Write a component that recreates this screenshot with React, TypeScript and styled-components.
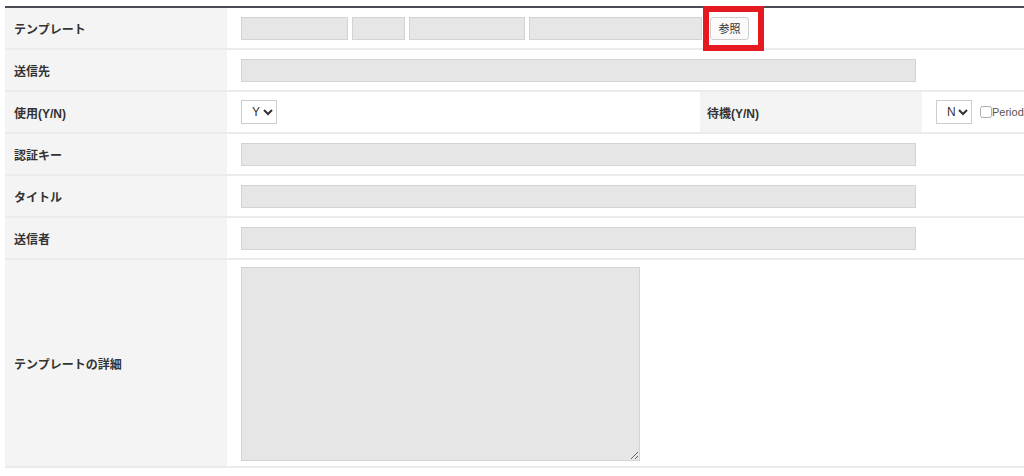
import React from 'react';
import styled, { createGlobalStyle } from 'styled-components';

const GlobalStyle = createGlobalStyle`
  html, body {
    margin: 0;
    padding: 0;
    background: #ffffff;
    overflow: hidden;
  }
  body {
    font-family: "Liberation Sans", "Noto Sans CJK JP", sans-serif;
    color: #333333;
  }
`;

const Page = styled.div`
  padding: 6px 0 0 5px;
  width: 1400px;
`;

const FormTable = styled.table`
  width: 1390px;
  table-layout: fixed;
  border-collapse: separate;
  border-spacing: 0;
  border-top: 2px solid #4b4b57;
`;

const LabelCell = styled.th<{ $indent?: number }>`
  height: 40px;
  padding: 0 0 0 ${(p) => p.$indent ?? 9}px;
  border-bottom: 2px solid #ebebeb;
  background: #f4f4f4;
  text-align: left;
  vertical-align: middle;
  font-family: "Liberation Sans", "Noto Sans CJK JP", sans-serif;
  font-size: 12px;
  font-weight: 700;
  color: #333333;
  white-space: nowrap;
`;

const ValueCell = styled.td<{ $top?: boolean }>`
  padding: ${(p) => (p.$top ? '7px 0 5px 14px' : '0 0 0 14px')};
  border-bottom: 2px solid #ebebeb;
  vertical-align: ${(p) => (p.$top ? 'top' : 'middle')};
  background: #ffffff;
`;

const FieldLine = styled.div`
  display: flex;
  align-items: center;
  gap: 4px;
`;

const TextInput = styled.input<{ $w: number }>`
  box-sizing: border-box;
  width: ${(p) => p.$w}px;
  height: 23px;
  margin: 0;
  padding: 0 6px;
  border: 1px solid #d3d3d3;
  background: #e6e6e6;
  font-family: "Liberation Sans", "Noto Sans CJK JP", sans-serif;
  font-size: 12px;
  outline: none;
`;

const ButtonSlot = styled.div`
  position: relative;
  margin-left: 4px;
`;

const LookupButton = styled.button`
  box-sizing: border-box;
  width: 39px;
  height: 23px;
  padding: 0;
  border: 1px solid #cfcfcf;
  border-radius: 3px;
  background: #fafafa;
  font-family: "Noto Sans CJK JP", sans-serif;
  font-size: 11px;
  color: #333333;
  display: flex;
  align-items: center;
  justify-content: center;
`;

const Highlight = styled.div`
  position: absolute;
  left: -7px;
  right: -15px;
  top: -11px;
  bottom: -11px;
  border: 6px solid #e41a20;
  pointer-events: none;
`;

const Select = styled.select`
  box-sizing: border-box;
  width: 36px;
  height: 24px;
  margin: 0;
  padding: 0 0 0 6px;
  border: 1px solid #cccccc;
  border-radius: 0;
  background: #ffffff;
  font-family: "Liberation Sans", sans-serif;
  font-size: 12px;
  color: #333333;
`;

const Inline = styled.div`
  display: flex;
  align-items: center;
  gap: 8px;
  white-space: nowrap;
`;

const CheckLabel = styled.label`
  display: flex;
  align-items: center;
  font-family: "Liberation Sans", sans-serif;
  font-size: 11px;
  color: #555555;
`;

const Check = styled.input`
  width: 12px;
  height: 12px;
  margin: 0;
  opacity: 0.6;
`;

const DetailArea = styled.textarea`
  box-sizing: border-box;
  display: block;
  width: 399px;
  height: 194px;
  margin: 0;
  border: 1px solid #d3d3d3;
  background: #e6e6e6;
  outline: none;
`;

const templateParts = [107, 53, 116, 173];

const wideRows = ['認証キー', 'タイトル', '送信者'];

export default function App() {
  return (
    <>
      <GlobalStyle />
      <Page>
        <FormTable>
          <colgroup>
            <col style={{ width: 222 }} />
            <col style={{ width: 473 }} />
            <col style={{ width: 222 }} />
            <col style={{ width: 473 }} />
          </colgroup>
          <tbody>
            <tr>
              <LabelCell>テンプレート</LabelCell>
              <ValueCell colSpan={3}>
                <FieldLine>
                  {templateParts.map((w, i) => (
                    <TextInput key={i} $w={w} readOnly />
                  ))}
                  <ButtonSlot>
                    <LookupButton type="button">参照</LookupButton>
                    <Highlight />
                  </ButtonSlot>
                </FieldLine>
              </ValueCell>
            </tr>
            <tr>
              <LabelCell>送信先</LabelCell>
              <ValueCell colSpan={3}>
                <TextInput $w={675} readOnly />
              </ValueCell>
            </tr>
            <tr>
              <LabelCell>使用(Y/N)</LabelCell>
              <ValueCell>
                <Select defaultValue="Y">
                  <option value="Y">Y</option>
                  <option value="N">N</option>
                </Select>
              </ValueCell>
              <LabelCell $indent={7}>待機(Y/N)</LabelCell>
              <ValueCell>
                <Inline>
                  <Select defaultValue="N">
                    <option value="Y">Y</option>
                    <option value="N">N</option>
                  </Select>
                  <CheckLabel>
                    <Check type="checkbox" />
                    Period
                  </CheckLabel>
                </Inline>
              </ValueCell>
            </tr>
            {wideRows.map((label) => (
              <tr key={label}>
                <LabelCell>{label}</LabelCell>
                <ValueCell colSpan={3}>
                  <TextInput $w={675} readOnly />
                </ValueCell>
              </tr>
            ))}
            <tr>
              <LabelCell>テンプレートの詳細</LabelCell>
              <ValueCell colSpan={3} $top>
                <DetailArea readOnly />
              </ValueCell>
            </tr>
          </tbody>
        </FormTable>
      </Page>
    </>
  );
}
